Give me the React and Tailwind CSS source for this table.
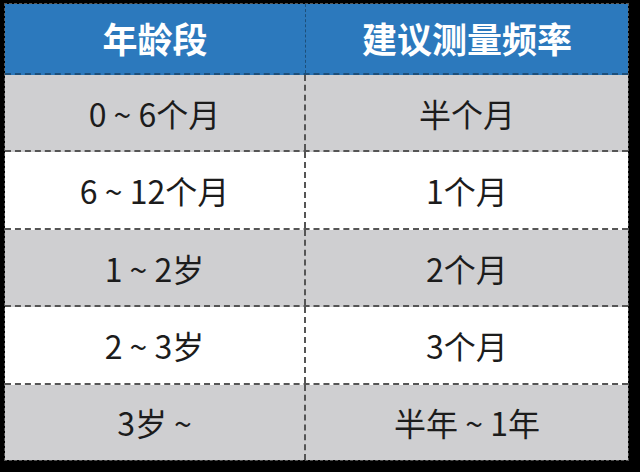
import React from 'react'

const rows = [
  ['0 ~ 6个月', '半个月', 'bg-[#cfcfd1]'],
  ['6 ~ 12个月', '1个月', 'bg-white'],
  ['1 ~ 2岁', '2个月', 'bg-[#cfcfd1]'],
  ['2 ~ 3岁', '3个月', 'bg-white'],
  ['3岁 ~', '半年 ~ 1年', 'bg-[#cfcfd1]'],
]

export default function App() {
  return (
    <div className="w-[640px] h-[472px] bg-black pl-[4px] pt-[3px] overflow-hidden" style={{ fontFamily: '"Noto Sans CJK SC", "Noto Sans", sans-serif' }}>
      <div className="w-[625px] h-[458px] border border-dashed border-[#555] flex flex-col">
        <div className="h-[71px] grid grid-cols-[301px_1fr] bg-[#2c79bd] text-white font-bold text-[35px] border-b-2 border-dashed border-[#1d4f7a]">
          <div className="flex items-center justify-center border-r border-dashed border-[#1d4f7a]">年龄段</div>
          <div className="flex items-center justify-center">建议测量频率</div>
        </div>
        {rows.map(([a, b, bg], i) => (
          <div key={i} className={`flex-1 grid grid-cols-[301px_1fr] ${bg} text-[#1c1c1c] text-[32px] ${i < rows.length - 1 ? 'border-b-2 border-dashed border-[#555]' : ''}`}>
            <div className="flex items-center justify-center border-r-2 border-dashed border-[#555]">{a}</div>
            <div className="flex items-center justify-center">{b}</div>
          </div>
        ))}
      </div>
    </div>
  )
}
